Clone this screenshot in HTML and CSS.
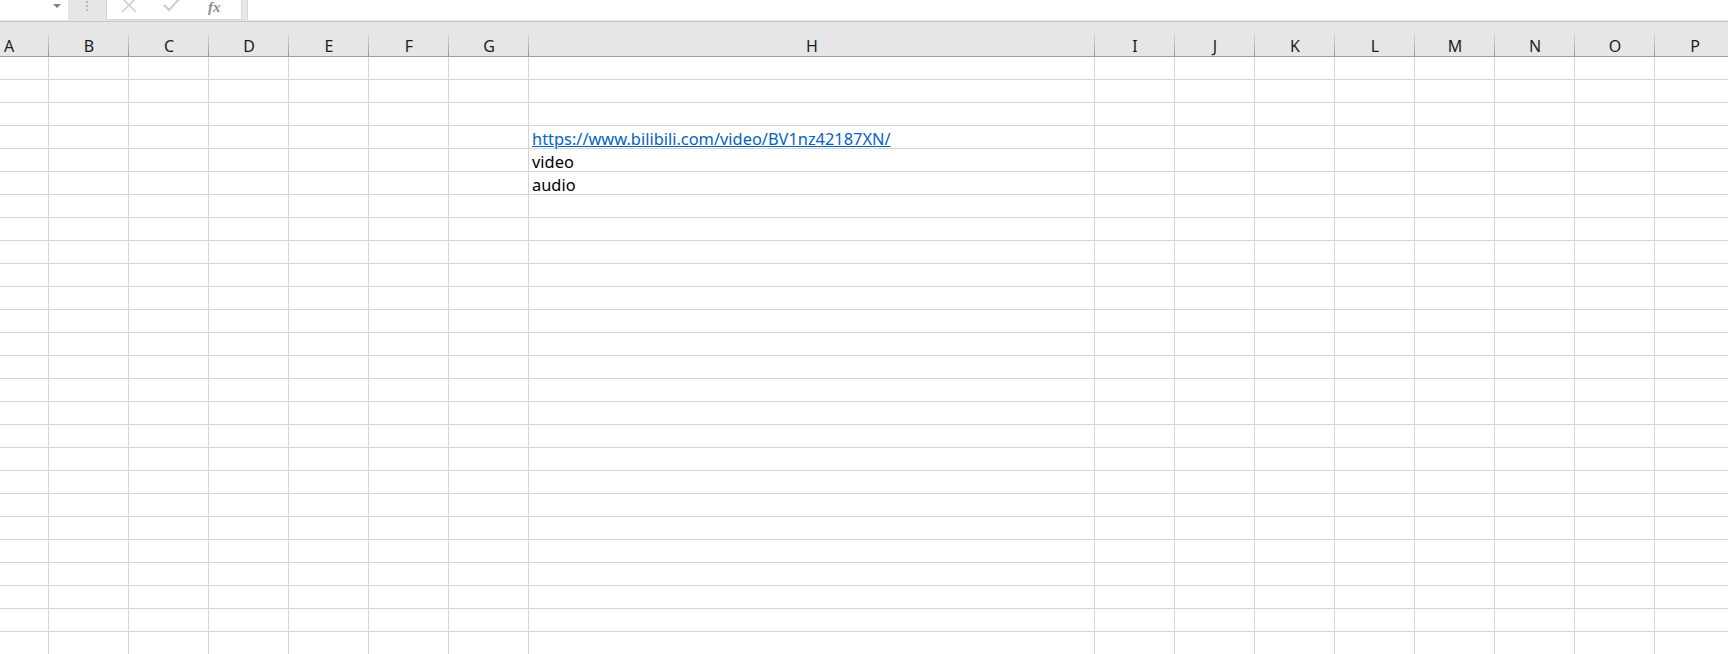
FILE: index.html
```html
<!DOCTYPE html>
<html lang="zh-CN">
<head>
    <meta charset="UTF-8">
    <meta name="viewport" content="width=device-width, initial-scale=1.0">
    <title>Sheet1</title>
    <link rel="stylesheet" href="styles.css">
</head>
<body>
    <div class="formula-bar">
        <div class="name-box"><span class="drop"></span></div>
        <div class="grip">
            <svg width="4" height="12" viewBox="0 0 4 12"><rect x="1" y="0" width="2" height="2" fill="#b8b8b8"/><rect x="1" y="4" width="2" height="2" fill="#b8b8b8"/><rect x="1" y="8" width="2" height="2" fill="#b8b8b8"/></svg>
        </div>
        <div class="fx-buttons">
            <svg class="ico" width="16" height="16" viewBox="0 0 16 16"><path d="M1 1 L15 15 M15 1 L1 15" stroke="#cfcfcf" stroke-width="1.6" fill="none"/></svg>
            <svg class="ico" width="18" height="16" viewBox="0 0 18 16"><path d="M1 8 L6 13 L17 1" stroke="#cfcfcf" stroke-width="2.2" fill="none"/></svg>
            <span class="fx">fx</span>
        </div>
        <div class="formula-input"></div>
    </div>

    <div class="sheet">
        <div class="col-headers">
            <div class="hd col-a">A</div>
            <div class="hd">B</div>
            <div class="hd">C</div>
            <div class="hd">D</div>
            <div class="hd">E</div>
            <div class="hd">F</div>
            <div class="hd">G</div>
            <div class="hd col-h">H</div>
            <div class="hd">I</div>
            <div class="hd">J</div>
            <div class="hd">K</div>
            <div class="hd">L</div>
            <div class="hd">M</div>
            <div class="hd">N</div>
            <div class="hd">O</div>
            <div class="hd">P</div>
        </div>
        <div class="grid">
            <div class="col col-a"></div>
            <div class="col"></div>
            <div class="col"></div>
            <div class="col"></div>
            <div class="col"></div>
            <div class="col"></div>
            <div class="col"></div>
            <div class="col col-h">
                <div class="cell"></div>
                <div class="cell"></div>
                <div class="cell"></div>
                <div class="cell"><a class="link" href="#">https://www.bilibili.com/video/BV1nz42187XN/</a></div>
                <div class="cell">video</div>
                <div class="cell">audio</div>
            </div>
            <div class="col"></div>
            <div class="col"></div>
            <div class="col"></div>
            <div class="col"></div>
            <div class="col"></div>
            <div class="col"></div>
            <div class="col"></div>
            <div class="col"></div>
        </div>
    </div>
</body>
</html>
```

FILE: styles.css
```css
html, body {
    margin: 0;
    padding: 0;
    height: 100%;
    overflow: hidden;
    background: #fff;
}
body {
    font-family: "Noto Sans", "Noto Sans CJK SC", sans-serif;
}

/* formula bar */
.formula-bar {
    display: flex;
    height: 21px;
    background: #e6e6e6;
    overflow: hidden;
}
.name-box {
    position: relative;
    width: 68px;
    height: 20px;
    background: #fff;
}
.drop {
    position: absolute;
    left: 53px;
    top: 4px;
    border-left: 4px solid transparent;
    border-right: 4px solid transparent;
    border-top: 4px solid #808080;
}
.grip {
    width: 38px;
    display: flex;
    justify-content: center;
    padding-top: 1px;
}
.fx-buttons {
    display: flex;
    align-items: flex-start;
    width: 136px;
    height: 20px;
    box-sizing: border-box;
    background: #fff;
    border: 1px solid #d6d6d6;
    border-top: none;
}
.ico {
    display: block;
    margin-top: -3px;
}
.fx-buttons .ico:first-child {
    margin-left: 14px;
}
.fx-buttons .ico:nth-child(2) {
    margin-left: 26px;
}
.fx {
    margin-left: 27px;
    font-family: "Liberation Serif", serif;
    font-style: italic;
    font-weight: bold;
    font-size: 15px;
    line-height: 14px;
    color: #8c8c8c;
}
.formula-input {
    flex: 1;
    margin-left: 5px;
    height: 20px;
    background: #fff;
    border-left: 1px solid #d6d6d6;
}

/* column headers */
.sheet {
    width: 1800px;
}
.col-headers {
    display: flex;
    height: 36px;
    box-sizing: border-box;
    background: #e6e6e6;
    border-top: 1px solid #c6c6c6;
    border-bottom: 1px solid #9e9e9e;
}
.hd {
    position: relative;
    flex: 0 0 80px;
    box-sizing: border-box;
    text-align: center;
    font-size: 16px;
    line-height: 20px;
    padding-top: 14px;
    color: #1c1c28;
}
.hd::after {
    content: "";
    position: absolute;
    right: 0;
    top: 12px;
    bottom: 0;
    width: 1px;
    background: linear-gradient(to bottom, #d8d8d8, #9a9a9a);
}
.col-a {
    margin-left: -31px;
}
.hd.col-h, .col.col-h {
    flex-basis: 566px;
}

/* cells */
.grid {
    display: flex;
    height: 620px;
    background: repeating-linear-gradient(to bottom, transparent 0 22px, #d4d4d4 22px 23px);
}
.col {
    flex: 0 0 80px;
    box-sizing: border-box;
    border-right: 1px solid #d4d4d4;
}
.cell {
    height: 23px;
    box-sizing: border-box;
    padding: 2px 0 0 3px;
    font-size: 16.4px;
    line-height: 22px;
    color: #000;
    white-space: nowrap;
}
.link {
    color: #0563c1;
    text-decoration: underline;
}
```
